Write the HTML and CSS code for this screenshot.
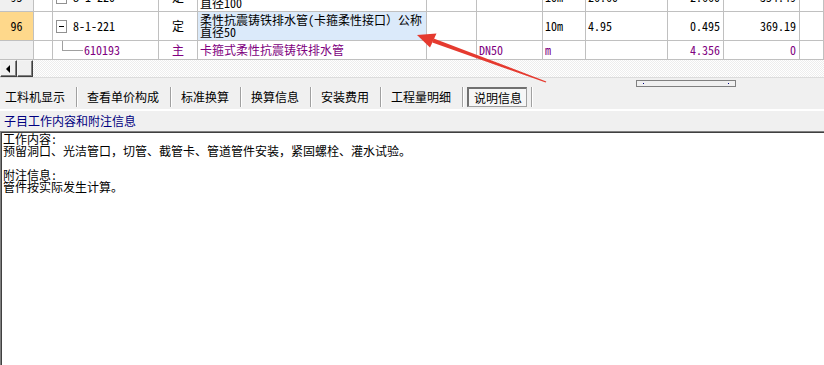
FILE: index.html
```html
<!DOCTYPE html>
<html lang="zh-CN">
<head>
    <meta charset="UTF-8">
    <title>子目说明信息</title>
    <link rel="stylesheet" href="styles.css">
</head>
<body>
    <div class="grid-wrap">
        <div class="grid">
            <!-- row 95, scrolled mostly out of view -->
            <div class="cell num">95</div>
            <div class="cell"></div>
            <div class="cell code"><span class="toggle plus"></span>8-1-220</div>
            <div class="cell type">定</div>
            <div class="cell name">柔性抗震铸铁排水管(卡箍柔性接口）公称<br>直径100</div>
            <div class="cell"></div>
            <div class="cell"></div>
            <div class="cell">10m</div>
            <div class="cell">26.60</div>
            <div class="cell right">2.660</div>
            <div class="cell right">354.49</div>
            <div class="cell"></div>

            <!-- row 96 -->
            <div class="cell num current">96</div>
            <div class="cell"></div>
            <div class="cell code"><span class="toggle"></span>8-1-221</div>
            <div class="cell type">定</div>
            <div class="cell name selected">柔性抗震铸铁排水管(卡箍柔性接口）公称<br>直径50</div>
            <div class="cell"></div>
            <div class="cell"></div>
            <div class="cell">10m</div>
            <div class="cell">4.95</div>
            <div class="cell right">0.495</div>
            <div class="cell right">369.19</div>
            <div class="cell"></div>

            <!-- material under 96 -->
            <div class="cell num"></div>
            <div class="cell"></div>
            <div class="cell code sub"><span class="branch"></span>610193</div>
            <div class="cell type sub">主</div>
            <div class="cell name sub">卡箍式柔性抗震铸铁排水管</div>
            <div class="cell"></div>
            <div class="cell sub">DN50</div>
            <div class="cell sub">m</div>
            <div class="cell"></div>
            <div class="cell right sub">4.356</div>
            <div class="cell right sub">0</div>
            <div class="cell"></div>
        </div>
    </div>

    <div class="hscroll">
        <div class="sb-btn"><span class="arrow-left"></span></div>
        <div class="sb-btn thumb"></div>
    </div>

    <div class="panel">
        <div class="grip"><span></span><span></span></div>
        <div class="tabs">
            <div class="tab first">工料机显示</div>
            <div class="tab">查看单价构成</div>
            <div class="tab">标准换算</div>
            <div class="tab">换算信息</div>
            <div class="tab">安装费用</div>
            <div class="tab">工程量明细</div>
            <div class="tab active"><span class="tab-box">说明信息</span></div>
        </div>
    </div>

    <div class="info-title">子目工作内容和附注信息</div>

    <div class="notes">
        <p>工作内容:<br>预留洞口、光洁管口，切管、截管卡、管道管件安装，紧固螺栓、灌水试验。</p>
        <p class="gap">附注信息:<br>管件按实际发生计算。</p>
    </div>

    <!-- annotation arrow pointing at the selected name -->
    <svg class="callout" width="824" height="365" viewBox="0 0 824 365">
        <polygon points="433.7,38.6 546.3,81.4 545.7,82.6 432.3,42.4" fill="#e53a2f"/>
        <polygon points="417,35 436.5,33.5 430,47.5" fill="#e53a2f"/>
    </svg>
</body>
</html>
```

FILE: styles.css
```css
body {
    margin: 0;
    width: 824px;
    height: 365px;
    overflow: hidden;
    position: relative;
    background: #fff;
    font-family: "Noto Sans Mono CJK SC", "Noto Sans CJK SC", sans-serif;
    font-size: 12px;
    color: #000;
}

/* ---- item grid ---- */
.grid-wrap {
    height: 60px;
    overflow: hidden;
}
.grid {
    display: grid;
    grid-template-columns: 34px 19px 106px 39px 229px 50px 66px 43px 82px 56px 76px 1fr;
    grid-template-rows: 29px 29px 19px;
    margin-top: -17px;
}
.cell {
    box-sizing: border-box;
    border-right: 1px solid #c0c0c0;
    border-bottom: 1px solid #c0c0c0;
    display: flex;
    align-items: center;
    padding: 0 2px;
    white-space: nowrap;
    overflow: hidden;
    line-height: 12px;
}
.cell.num {
    justify-content: center;
    background: #f0f0f0;
}
.cell.num.current { background: #fed88b; }
.cell.type { justify-content: center; }
.cell.right {
    justify-content: flex-end;
    padding-right: 3px;
}
.cell.selected { background: #dbeafa; }
.cell.sub { color: #800080; }

.cell.code { padding-left: 3px; }
.toggle {
    width: 11px;
    height: 13px;
    box-sizing: border-box;
    border: 1px solid #919191;
    background: #fff;
    margin-right: 6px;
    position: relative;
    flex: none;
}
.toggle::before {
    content: '';
    position: absolute;
    left: 2px;
    top: 5px;
    width: 5px;
    height: 1px;
    background: #000;
}
.toggle.plus::after {
    content: '';
    position: absolute;
    left: 4px;
    top: 3px;
    width: 1px;
    height: 5px;
    background: #000;
}
.branch {
    align-self: flex-start;
    width: 21px;
    height: 10px;
    box-sizing: border-box;
    border-left: 1px solid #a0a0a0;
    border-bottom: 1px solid #a0a0a0;
    margin-left: 6px;
    margin-right: 1px;
    flex: none;
}

/* ---- horizontal scroll bar ---- */
.hscroll {
    display: flex;
    height: 17px;
    background: repeating-conic-gradient(#fff 0 25%, #ededed 0 50%) 0 0 / 2px 2px;
}
.sb-btn {
    width: 17px;
    box-sizing: border-box;
    border: 1px solid;
    border-color: #f4f4f4 #404040 #404040 #f4f4f4;
    box-shadow: inset -1px -1px #808080;
    background: #f0f0f0;
    display: flex;
    align-items: center;
    justify-content: center;
}
.sb-btn.thumb { width: 16px; }
.arrow-left {
    width: 0;
    height: 0;
    border-top: 4px solid transparent;
    border-bottom: 4px solid transparent;
    border-right: 4px solid #000;
    margin-right: 2px;
}

/* ---- tab strip ---- */
.panel {
    background: #f0f0f0;
    border-top: 1px solid #dcdcdc;
    border-bottom: 2px solid #fff;
    padding: 2px 0;
}
.grip {
    margin-left: 636px;
    width: 100px;
    height: 7px;
    box-sizing: border-box;
    border: 1px solid #808080;
    display: flex;
    justify-content: space-between;
    padding: 2px 6px 0;
}
.grip span {
    width: 1px;
    height: 1px;
    background: #000080;
}
.tabs {
    display: flex;
    height: 20px;
}
.tab {
    padding: 0 11px 0 10px;
    line-height: 20px;
    border-right: 1px solid #a0a0a0;
    box-shadow: 1px 0 #fff;
}
.tab.first { padding-left: 5px; }
.tab.active {
    padding: 0 4px;
    display: flex;
}
.tab-box {
    box-sizing: border-box;
    width: 60px;
    height: 20px;
    line-height: 17px;
    padding-left: 5px;
    border: 1px solid #a0a0a0;
    border-top: 2px solid #707070;
    border-left: 2px solid #707070;
    background: #f6f6f6;
}

/* ---- notes ---- */
.info-title {
    background: #f0f0f0;
    color: #000080;
    height: 20px;
    line-height: 20px;
    padding-left: 4px;
}
.notes {
    height: 234px;
    box-sizing: border-box;
    border-top: 1px solid #808080;
    border-left: 1px solid #808080;
    box-shadow: inset 1px 1px #404040;
    padding: 1px 0 0 2px;
    line-height: 12px;
}
.notes p { margin: 0; }
.notes p.gap { margin-top: 12px; }

.callout {
    position: absolute;
    top: 0;
    left: 0;
    pointer-events: none;
}
```
